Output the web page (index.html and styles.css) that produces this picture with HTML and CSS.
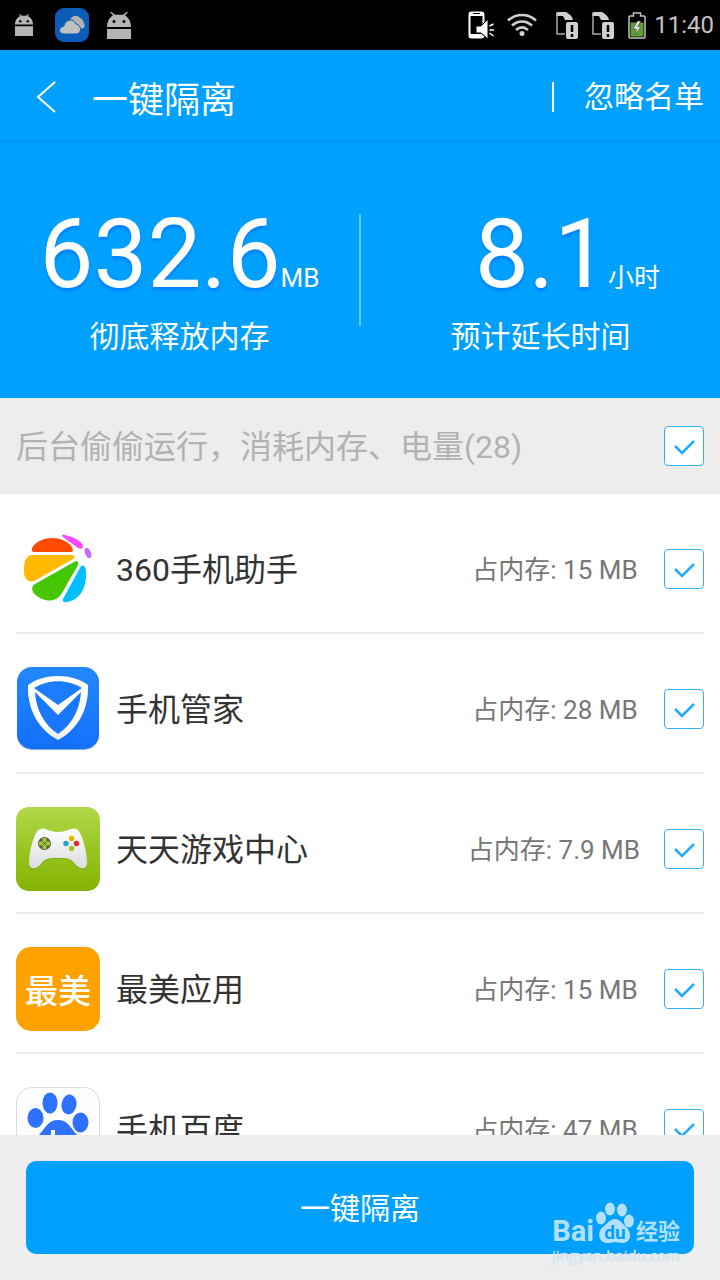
FILE: index.html
```html
<!DOCTYPE html>
<html lang="zh-CN">
<head>
  <meta charset="UTF-8">
  <meta name="viewport" content="width=device-width, initial-scale=1.0">
  <title>一键隔离</title>
  <link rel="stylesheet" href="styles.css">
</head>

<body>
  <!-- 系统状态栏 -->
  <div class="status">
    <div class="status-left">
      <svg class="droid-small" viewBox="0 0 24 27" width="18" height="22" preserveAspectRatio="none" fill="#b5b5b5">
        <path d="M0 13C0 7 4 3.500 7 2.500L5 0h1.500L9 2.200h6L17.500 0H19l-2 2.500C20 3.500 24 7 24 13z"/>
        <path d="M0 15h24v12H0z"/>
        <circle cx="7" cy="9" r="1.500" fill="#000"/>
        <circle cx="17" cy="9" r="1.500" fill="#000"/>
      </svg>
      <svg class="cloud" viewBox="0 0 34 34" width="34" height="34">
        <rect width="34" height="34" rx="9" fill="#0d5cb8"/>
        <path d="M15 12c1-4 7-6 10-2 3 1 4 4 4 6 2 2 0 4-3 5z" fill="#b3b5b2"/>
        <path d="M9 26c-6 0-6-7 0-8 1-7 10-8 12-2 6 1 6 10 0 10z" fill="#bfc2bd" stroke="#0d5cb8"/>
      </svg>
      <svg class="droid" viewBox="0 0 24 27" width="24" height="27" fill="#b5b5b5">
        <path d="M0 15C0 8 4 4.500 6 3.500L3 0h1.500L8 2.800h8L19.500 0H21l-3 3.500C20 4.500 24 8 24 15z"/>
        <path d="M0 17h24v10H0z"/>
        <circle cx="7" cy="9.500" r="1.500" fill="#000"/>
        <circle cx="17" cy="9.500" r="1.500" fill="#000"/>
      </svg>
    </div>
    <div class="status-right">
      <svg viewBox="0 0 26 28" width="26" height="28">
        <rect x="1.500" y="1.500" width="14" height="25" rx="2.500" fill="none" stroke="#fff" stroke-width="2"/>
        <path d="M1 1h15v4H1zM1 23h13v4H1z" fill="#fff"/>
        <path d="M5 2.500h7" stroke="#000"/>
        <path d="M8 15h5l7-7v20l-7-6H8z" fill="#fff" stroke="#000" stroke-width="1"/>
        <path d="M21.500 15l4-2M21.500 19h4.500M21.500 22l4 3" stroke="#fff" stroke-width="1.500"/>
      </svg>
      <svg viewBox="0 0 32 24" width="32" height="24" fill="none" stroke="#d0d0d0" stroke-width="2.500">
        <path d="M2 7.500C10 0 22 0 30 7.500M6 12.500C12 7 20 7 26 12.500M10 17C14 13.500 18 13.500 22 17"/>
        <circle cx="16" cy="20.500" r="2.500" fill="#d0d0d0" stroke="none"/>
      </svg>
      <svg class="sim" viewBox="0 0 22 27" width="22" height="27">
        <path d="M0 2q0-2 2-2h8q6 3 7 8H9L7 4H0z" fill="#d0d0d0"/>
        <path d="M9 22H1V2" fill="none" stroke="#a8a8a8" stroke-width="1.500"/>
        <rect x="10" y="10" width="12" height="17" rx="2" fill="#d0d0d0"/>
        <path d="M16 13v7M16 22v3" stroke="#000" stroke-width="2.500"/>
      </svg>
      <svg class="sim" viewBox="0 0 22 27" width="22" height="27">
        <path d="M0 2q0-2 2-2h8q6 3 7 8H9L7 4H0z" fill="#d0d0d0"/>
        <path d="M9 22H1V2" fill="none" stroke="#a8a8a8" stroke-width="1.500"/>
        <rect x="10" y="10" width="12" height="17" rx="2" fill="#d0d0d0"/>
        <path d="M16 13v7M16 22v3" stroke="#000" stroke-width="2.500"/>
      </svg>
      <svg viewBox="0 0 18 27" width="18" height="27">
        <path d="M2.500 10.500h13v14h-13z" fill="#5fa02e"/>
        <path d="M5.500 1h7v3H16q1 0 1 1v20q0 1-1 1H2q-1 0-1-1V5q0-1 1-1h3.500z" fill="none" stroke="#c4c4c4" stroke-width="1.500"/>
        <path d="M9.500 9L5 17h3.500L7 23l6-8.500H9.500L13 9z" fill="#e4e4e4" stroke="#333" stroke-width=".5"/>
      </svg>
      <span class="clock">11:40</span>
    </div>
  </div>

  <!-- 标题栏 -->
  <header class="topbar">
    <button class="back" type="button" aria-label="返回">
      <svg viewBox="0 0 20 32" width="20" height="32" fill="none" stroke="#fff" stroke-width="2">
        <path d="M19 1L2 16l17 15"/>
      </svg>
    </button>
    <h1 class="title">一键隔离</h1>
    <a class="ignore" href="#">忽略名单</a>
  </header>

  <!-- 统计信息 -->
  <section class="stats">
    <div class="stat">
      <div class="amount"><span class="number">632.6</span><span class="unit">MB</span></div>
      <div class="caption">彻底释放内存</div>
    </div>
    <div class="stat">
      <div class="amount amount-time"><span class="number">8.1</span><span class="unit">小时</span></div>
      <div class="caption">预计延长时间</div>
    </div>
  </section>

  <div class="group">
    <label class="group-name" for="all">后台偷偷运行，消耗内存、电量(28)</label>
    <input class="check" type="checkbox" id="all" checked>
  </div>

  <!-- 应用列表 -->
  <ul class="apps">
    <li class="app">
      <svg class="icon" viewBox="0 0 84 84">
        <path d="M18 25Q15 25 16 21C24 8 47 8 56 20Q58 25 55 25z" fill="#ff4a00"/>
        <path d="M46 8Q47 7 52 9C60 11 66 15 67 19Q67 23 62 21L47 10Q46 9 46 8z" fill="#fb46ff"/>
        <ellipse cx="72" cy="26" rx="3" ry="5.500" transform="rotate(-22 72 26)" fill="#c46cff"/>
        <path d="M16 28H56Q61 29 57 32L20 53C13 57 8 52 8 45C8 35 9 29 16 28z" fill="#ffb900"/>
        <path d="M58 35Q63 32 62 38L46 66C40 76 29 75 21 69C15 65 15 59 19 57z" fill="#45c703"/>
        <path d="M65 39Q69 37 70 44C71 61 64 73 51 75Q46 76 47 72z" fill="#00bfff"/>
      </svg>
      <label class="name" for="app1">360手机助手</label>
      <span class="memory">占内存: 15 MB</span>
      <input class="check" type="checkbox" id="app1" checked>
    </li>
    <li class="app">
      <svg class="icon" viewBox="0 0 84 84">
        <defs>
          <linearGradient id="blue" x1="0" y1="0" x2="0" y2="1">
            <stop offset="0" stop-color="#2388fd"/>
            <stop offset="1" stop-color="#146ffb"/>
          </linearGradient>
          <linearGradient id="shield" x1="0" y1="0" x2="0" y2="1">
            <stop offset=".7" stop-color="#fff"/>
            <stop offset="1" stop-color="#e8edf2"/>
          </linearGradient>
        </defs>
        <rect x="1" y="1" width="82" height="82" rx="15" fill="#8fa9cf"/>
        <rect x="1" y="0" width="82" height="82" rx="15" fill="url(#blue)"/>
        <path d="M12 18C28 6 56 6 72 18C73 40 63 62 42 73C21 62 11 40 12 18z" fill="url(#shield)"/>
        <path d="M18 21C32 12 52 12 66 21L42 38z" fill="#1b7dfd"/>
        <path d="M19 25L42 48L65 25C64 42 56 58 42 67C28 58 20 42 19 25z" fill="#1877fc"/>
      </svg>
      <label class="name" for="app2">手机管家</label>
      <span class="memory">占内存: 28 MB</span>
      <input class="check" type="checkbox" id="app2" checked>
    </li>
    <li class="app">
      <svg class="icon" viewBox="0 0 84 84">
        <defs>
          <linearGradient id="green" x1="0" y1="0" x2="0" y2="1">
            <stop offset="0" stop-color="#aed849"/>
            <stop offset="1" stop-color="#85b300"/>
          </linearGradient>
          <linearGradient id="pad" x1="0" y1="0" x2="0" y2="1">
            <stop offset="0" stop-color="#fff"/>
            <stop offset="1" stop-color="#dcdcdc"/>
          </linearGradient>
        </defs>
        <rect width="84" height="84" rx="13" fill="url(#green)"/>
        <path d="M22 24Q26 21 32 23Q42 28 52 23Q58 21 62 24C67 30 71 47 71 57C71 64 64 64 59 58C55 53 54 52 42 52C30 52 29 53 25 58C20 64 13 64 13 57C13 47 17 30 22 24z" fill="#5d8406" opacity=".4"/>
        <path d="M22 23Q26 20 32 23Q42 27 52 23Q58 20 62 23C67 29 71 46 71 56C71 63 64 63 59 57C55 52 54 51 42 51C30 51 29 52 25 57C20 63 13 63 13 56C13 46 17 29 22 23z" fill="url(#pad)"/>
        <circle cx="28.500" cy="36.500" r="6.500" fill="#55594b"/>
        <path d="M28.500 31v11M23 36.500h11" stroke="#a1c82a" stroke-width="4"/>
        <path d="M27 35l3 3M30 35l-3 3" stroke="#55594b" stroke-width="1"/>
        <circle cx="55.500" cy="31.500" r="2.700" fill="#e7b500"/>
        <circle cx="50" cy="36.500" r="2.700" fill="#22a5c8"/>
        <circle cx="60.500" cy="36.500" r="2.700" fill="#dc2c35"/>
        <circle cx="55.500" cy="41.500" r="2.700" fill="#9bc824"/>
      </svg>
      <label class="name" for="app3">天天游戏中心</label>
      <span class="memory">占内存: 7.9 MB</span>
      <input class="check" type="checkbox" id="app3" checked>
    </li>
    <li class="app">
      <span class="icon icon-zuimei">最美</span>
      <label class="name" for="app4">最美应用</label>
      <span class="memory">占内存: 15 MB</span>
      <input class="check" type="checkbox" id="app4" checked>
    </li>
    <li class="app">
      <svg class="icon" viewBox="0 0 84 84">
        <rect x=".5" y=".5" width="83" height="83" rx="15" fill="#fdfdff" stroke="#d6d9e6"/>
        <g fill="#2e70ff">
          <ellipse cx="34" cy="16" rx="7.500" ry="10.500"/>
          <ellipse cx="53" cy="17.500" rx="7.500" ry="10" transform="rotate(10 53 17.500)"/>
          <ellipse cx="19.500" cy="31" rx="8" ry="10"/>
          <ellipse cx="64.500" cy="35.500" rx="8" ry="10"/>
          <path d="M42 33C53 33 55 43 64 51C72 60 67 76 53 73C45 71 39 71 31 73C17 76 12 60 20 51C29 43 31 33 42 33z"/>
        </g>
        <path d="M37 43v22h-7q-5-3-5-7t5-7h7M43 51v10q0 4 4 4h8V51" fill="none" stroke="#fff" stroke-width="4"/>
      </svg>
      <label class="name" for="app5">手机百度</label>
      <span class="memory">占内存: 47 MB</span>
      <input class="check" type="checkbox" id="app5" checked>
    </li>
  </ul>

  <footer class="bottom">
    <button class="isolate" type="button">一键隔离</button>
    <!-- 百度经验水印 -->
    <div class="watermark">
      <div class="brand">
        <span class="bai">Bai</span>
        <span class="paw">
          <svg viewBox="0 0 38 42" width="38" height="42" fill="#b3e0ff">
            <ellipse cx="5" cy="16" rx="5" ry="6.500"/>
            <ellipse cx="14" cy="7" rx="5" ry="6.500"/>
            <ellipse cx="26" cy="8" rx="5" ry="6.500"/>
            <ellipse cx="33" cy="19" rx="5" ry="6.500"/>
            <path d="M19 17c5 0 7 4 11 8 6 5 6 16-4 16-3 0-5-1-7-1s-4 1-7 1C2 41 1 30 7 25c5-4 7-8 12-8z"/>
          </svg>
          <span class="du">du</span>
        </span>
        <span class="jingyan">经验</span>
      </div>
      <div class="site">jingyan.baidu.com</div>
    </div>
  </footer>
</body>
</html>
```
FILE: styles.css
```css
* {
  box-sizing: border-box;
}

body {
  display: flex;
  flex-direction: column;
  height: 100vh;
  margin: 0;
  background-color: #fff;
  color: #333;
  font-family: Roboto, "Noto Sans CJK SC", sans-serif;
}

button {
  border: none;
  color: #fff;
  font-family: inherit;
  cursor: pointer;
}

svg {
  display: block;
  flex: none;
}

/* 状态栏 */
.status {
  display: flex;
  flex: none;
  justify-content: space-between;
  align-items: center;
  height: 50px;
  padding: 0 6px 0 15px;
  background-color: #000;
}

.status-left {
  display: flex;
  align-items: center;
}

.cloud {
  margin: 0 18px 0 22px;
}

.status-right {
  display: flex;
  align-items: center;
  gap: 14px;
}

.status-right svg:first-child {
  margin-right: -2px;
}

.sim:nth-child(3) {
  margin-left: 4px;
}

.clock {
  margin-left: -6px;
  color: #c4c4c4;
  font-size: 24px;
}

/* 标题栏 */
.topbar {
  display: flex;
  flex: none;
  align-items: center;
  height: 92px;
  padding: 3px 16px 0 0;
  border-bottom: 2px solid #0092e8;
  background-color: #00a0ff;
  color: #fff;
}

.back {
  padding: 20px 36px;
  background: none;
}

.title {
  flex: 1;
  margin: 0;
  font-size: 36px;
  font-weight: normal;
}

.ignore {
  padding-left: 30px;
  border-left: 2px solid #fff;
  color: #fff;
  font-size: 30px;
  line-height: 30px;
  text-decoration: none;
}

/* 统计信息 */
.stats {
  display: flex;
  flex: none;
  padding: 72px 0;
  background-color: #00a0ff;
  color: #fff;
}

.stat {
  flex: 1;
  height: 112px;
  text-align: center;
}

.stat:first-child {
  border-right: 2px solid #66c6ff;
}

.amount {
  height: 105px;
  line-height: 80px;
}

.amount-time {
  padding-left: 54px;
}

.number {
  font-size: 96px;
  text-shadow: 0 3px 3px #0080ff;
}

.unit {
  font-size: 26px;
}

.caption {
  font-size: 30px;
  line-height: 36px;
}

/* 分组标题 */
.group {
  display: flex;
  flex: none;
  justify-content: space-between;
  align-items: center;
  height: 96px;
  padding: 0 16px;
  background-color: #ededed;
}

.group-name {
  padding-bottom: 4px;
  color: #b2b2b2;
  font-size: 32px;
}

.check {
  flex: none;
  width: 40px;
  height: 40px;
  margin: 0;
  border: 1px solid #33b1ff;
  border-radius: 4px;
  background-color: #fff;
  appearance: none;
}

.check:checked {
  background-image: url("data:image/svg+xml,%3Csvg xmlns='http://www.w3.org/2000/svg' viewBox='0 0 38 38'%3E%3Cpath d='M10 19l7 7L29 14' fill='none' stroke='%2322aaff' stroke-width='2.500'/%3E%3C/svg%3E");
}

/* 应用列表 */
.apps {
  flex: 1;
  min-height: 0;
  margin: 0;
  padding: 0 16px;
  overflow-y: auto;
  scrollbar-width: none;
  list-style: none;
}

.app {
  display: flex;
  align-items: center;
  padding: 33px 0 21px;
  border-bottom: 2px solid #ebebeb;
}

.icon {
  flex: none;
  width: 84px;
  height: 84px;
  margin-right: 16px;
}

.icon-zuimei {
  border-radius: 15px;
  background-color: #ffa200;
  color: #fff;
  font-size: 33px;
  font-weight: 500;
  line-height: 90px;
  text-align: center;
}

.name {
  flex: 1;
  padding-bottom: 4px;
  font-size: 32px;
}

.memory {
  min-width: 170px;
  margin-right: 24px;
  padding-bottom: 4px;
  color: #777;
  font-size: 26px;
  text-align: center;
}

/* 底部按钮 */
.bottom {
  position: relative;
  flex: none;
  padding: 26px;
  background-color: #ededed;
}

.isolate {
  display: block;
  width: 100%;
  height: 93px;
  padding-bottom: 4px;
  border-radius: 10px;
  background-color: #00a0ff;
  font-size: 30px;
}

/* 水印浮在按钮上 */
.watermark {
  position: absolute;
  right: 40px;
  bottom: 16px;
  color: #b3e0ff;
}

.brand {
  display: flex;
  align-items: flex-end;
  gap: 2px;
  height: 42px;
  margin-bottom: 2px;
}

.bai {
  font-size: 29px;
  font-weight: bold;
  line-height: 26px;
}

.paw {
  position: relative;
}

.du {
  position: absolute;
  right: 0;
  bottom: 0;
  left: 0;
  color: #00a0ff;
  font-size: 19px;
  font-weight: bold;
  line-height: 22px;
  text-align: center;
}

.jingyan {
  font-size: 22px;
  font-weight: bold;
  line-height: 24px;
}

.site {
  color: #d4ecfb;
  font-family: "Open Sans", sans-serif;
  font-size: 15px;
  line-height: 18px;
  text-shadow: 0 0 1px #c8c8c8;
}
```
